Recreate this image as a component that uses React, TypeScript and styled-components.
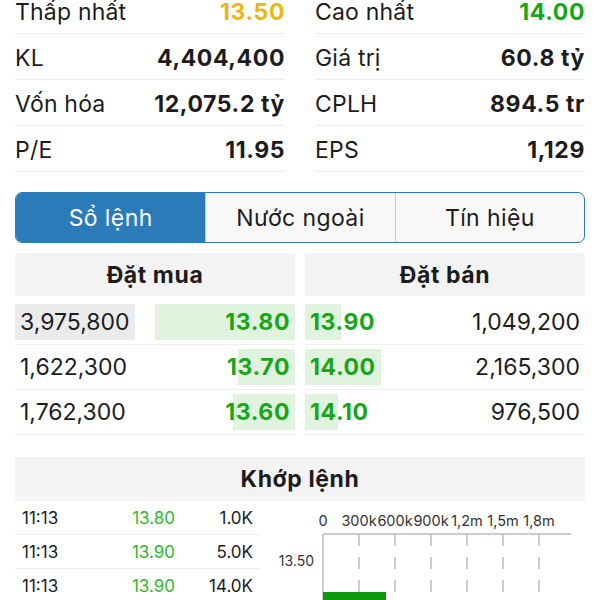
import React from 'react'
import styled, { createGlobalStyle } from 'styled-components'

const GlobalStyle = createGlobalStyle`
	html, body {
		margin: 0;
		padding: 0;
		background: #ffffff;
		overflow: hidden;
	}
	body {
		font-family: Inter, 'Noto Sans', 'Liberation Sans', sans-serif;
		color: #1c1c1e;
	}
`

const GREEN = '#17a617'
const GREEN_LIGHT = '#2dba2d'
const GREEN_BG = '#dff3df'
const BLUE = '#2b7bb9'

const Page = styled.div`
	width: 600px;
	height: 600px;
	overflow: hidden;
`

const Scroller = styled.div`
	margin-top: -12px;
	display: flex;
	flex-direction: column;
`

const StatsGrid = styled.div`
	display: grid;
	grid-template-columns: 1fr 1fr;
	column-gap: 30px;
	padding: 0 15px;
`

const StatRow = styled.div`
	display: flex;
	align-items: center;
	justify-content: space-between;
	box-sizing: border-box;
	height: 46px;
	padding-top: 2px;
	border-bottom: 1px solid #ececec;
	font-size: 23px;
`

const StatLabel = styled.span`
	font-weight: 400;
	color: #1c1c1e;
	letter-spacing: 0.2px;
`

const StatValue = styled.span<{ color?: string }>`
	font-weight: 700;
	letter-spacing: 0.6px;
	color: ${({ color }) => color || '#1c1c1e'};
`

const TabBar = styled.div`
	margin: 20px 15px 0 15px;
	display: grid;
	grid-template-columns: 1fr 1fr 1fr;
	height: 49px;
	border: 1px solid ${BLUE};
	border-radius: 7px;
	overflow: hidden;
	background: #f8f8f8;
`

const Tab = styled.div<{ active?: boolean }>`
	display: flex;
	align-items: center;
	justify-content: center;
	font-size: 23px;
	letter-spacing: 0.4px;
	color: ${({ active }) => (active ? '#ffffff' : '#1c1c1e')};
	background: ${({ active }) => (active ? BLUE : 'transparent')};
	& + & {
		border-left: 1px solid #c9c9c9;
	}
`

const BookGrid = styled.div`
	margin: 10px 15px 0 15px;
	display: grid;
	grid-template-columns: 1fr 1fr;
	column-gap: 10px;
`

const BookColumn = styled.div`
	display: flex;
	flex-direction: column;
`

const SectionHeader = styled.div`
	display: flex;
	align-items: center;
	justify-content: center;
	height: 43px;
	background: #f3f3f3;
	font-size: 23px;
	font-weight: 700;
	letter-spacing: 0.6px;
	color: #1c1c1e;
	margin-bottom: 4px;
`

const BookRow = styled.div<{ side: 'buy' | 'sell' }>`
	display: flex;
	flex-direction: ${({ side }) => (side === 'buy' ? 'row' : 'row-reverse')};
	align-items: center;
	justify-content: space-between;
	height: 44px;
	border-bottom: 1px solid #efefef;
	font-size: 23px;
`

const Volume = styled.span<{ flash?: boolean }>`
	display: flex;
	align-items: center;
	height: 36px;
	padding: 0 5px;
	background: ${({ flash }) => (flash ? '#ebebeb' : 'transparent')};
	color: #1c1c1e;
`

const PriceCell = styled.div<{ side: 'buy' | 'sell' }>`
	position: relative;
	flex: 1;
	height: 36px;
	display: flex;
	align-items: center;
	justify-content: ${({ side }) => (side === 'buy' ? 'flex-end' : 'flex-start')};
	padding: 0 5px;
`

const DepthBar = styled.div<{ side: 'buy' | 'sell' }>`
	position: absolute;
	top: 0;
	bottom: 0;
	${({ side }) => (side === 'buy' ? 'right: 0;' : 'left: 0;')}
	background: ${GREEN_BG};
`

const Price = styled.span`
	position: relative;
	font-weight: 700;
	letter-spacing: 0.6px;
	color: ${GREEN};
`

const MatchHeader = styled(SectionHeader)`
	margin: 22px 15px 0 15px;
	height: 44px;
	margin-bottom: 0;
`

const MatchBody = styled.div`
	display: grid;
	grid-template-columns: 245px 1fr;
	column-gap: 10px;
	padding-left: 15px;
`

const TradeList = styled.div`
	display: flex;
	flex-direction: column;
`

const TradeRow = styled.div`
	display: grid;
	grid-template-columns: 63px 90px 1fr;
	align-items: center;
	height: 33px;
	border-bottom: 1px solid #ececec;
	font-size: 17px;
	padding: 0 7px 0 7px;
`

const TradeTime = styled.span`
	color: #1c1c1e;
`

const TradePrice = styled.span`
	color: ${GREEN_LIGHT};
	text-align: right;
`

const TradeVolume = styled.span`
	color: #1c1c1e;
	text-align: right;
`

const stats = [
	[
		{ label: 'Thấp nhất', value: '13.50', color: '#ecb80f' },
		{ label: 'Cao nhất', value: '14.00', color: GREEN }
	],
	[
		{ label: 'KL', value: '4,404,400' },
		{ label: 'Giá trị', value: '60.8 tỷ' }
	],
	[
		{ label: 'Vốn hóa', value: '12,075.2 tỷ' },
		{ label: 'CPLH', value: '894.5 tr' }
	],
	[
		{ label: 'P/E', value: '11.95' },
		{ label: 'EPS', value: '1,129' }
	]
]

const bids = [
	{ volume: '3,975,800', price: '13.80', bar: 140, flash: true },
	{ volume: '1,622,300', price: '13.70', bar: 57 },
	{ volume: '1,762,300', price: '13.60', bar: 62 }
]

const asks = [
	{ volume: '1,049,200', price: '13.90', bar: 36 },
	{ volume: '2,165,300', price: '14.00', bar: 76 },
	{ volume: '976,500', price: '14.10', bar: 33 }
]

const trades = [
	{ time: '11:13', price: '13.80', volume: '1.0K' },
	{ time: '11:13', price: '13.90', volume: '5.0K' },
	{ time: '11:13', price: '13.90', volume: '14.0K' }
]

const ticks = ['0', '300k', '600k', '900k', '1,2m', '1,5m', '1,8m']

function VolumeChart() {
	const x0 = 53
	const step = 36
	return (
		<svg width="315" height="101" viewBox="0 0 315 101">
			{ticks.map((t, i) => (
				<text
					key={t}
					x={x0 + i * step}
					y={25}
					textAnchor="middle"
					fontSize="14.5"
					fontFamily="Inter, 'Noto Sans', sans-serif"
					fill="#333"
				>
					{t}
				</text>
			))}
			<line x1={x0} y1={33} x2={301} y2={33} stroke="#bdbdbd" strokeWidth="1.5" />
			<line x1={x0} y1={33} x2={x0} y2={101} stroke="#bdbdbd" strokeWidth="1.5" />
			{ticks.slice(1).map((t, i) => (
				<line
					key={t}
					x1={x0 + (i + 1) * step}
					y1={33}
					x2={x0 + (i + 1) * step}
					y2={101}
					stroke="#bdbdbd"
					strokeWidth="1.5"
					strokeDasharray="12 11"
				/>
			))}
			<text
				x={44}
				y={65}
				textAnchor="end"
				fontSize="14"
				fontFamily="Inter, 'Noto Sans', sans-serif"
				fill="#333"
			>
				13.50
			</text>
			<rect x={x0} y={91} width={63} height={12} fill="#0c9a0c" />
		</svg>
	)
}

export default function App() {
	return (
		<Page>
			<GlobalStyle />
			<Scroller>
				<StatsGrid>
					{stats.map((pair) =>
						pair.map((s) => (
							<StatRow key={s.label}>
								<StatLabel>{s.label}</StatLabel>
								<StatValue color={s.color}>{s.value}</StatValue>
							</StatRow>
						))
					)}
				</StatsGrid>

				<TabBar>
					<Tab active>Sổ lệnh</Tab>
					<Tab>Nước ngoài</Tab>
					<Tab>Tín hiệu</Tab>
				</TabBar>

				<BookGrid>
					<BookColumn>
						<SectionHeader>Đặt mua</SectionHeader>
						{bids.map((b) => (
							<BookRow side="buy" key={b.price}>
								<Volume flash={b.flash}>{b.volume}</Volume>
								<PriceCell side="buy">
									<DepthBar side="buy" style={{ width: b.bar }} />
									<Price>{b.price}</Price>
								</PriceCell>
							</BookRow>
						))}
					</BookColumn>
					<BookColumn>
						<SectionHeader>Đặt bán</SectionHeader>
						{asks.map((a) => (
							<BookRow side="sell" key={a.price}>
								<Volume>{a.volume}</Volume>
								<PriceCell side="sell">
									<DepthBar side="sell" style={{ width: a.bar }} />
									<Price>{a.price}</Price>
								</PriceCell>
							</BookRow>
						))}
					</BookColumn>
				</BookGrid>

				<MatchHeader>Khớp lệnh</MatchHeader>
				<MatchBody>
					<TradeList>
						{trades.map((t, i) => (
							<TradeRow key={i}>
								<TradeTime>{t.time}</TradeTime>
								<TradePrice>{t.price}</TradePrice>
								<TradeVolume>{t.volume}</TradeVolume>
							</TradeRow>
						))}
					</TradeList>
					<VolumeChart />
				</MatchBody>
			</Scroller>
		</Page>
	)
}
